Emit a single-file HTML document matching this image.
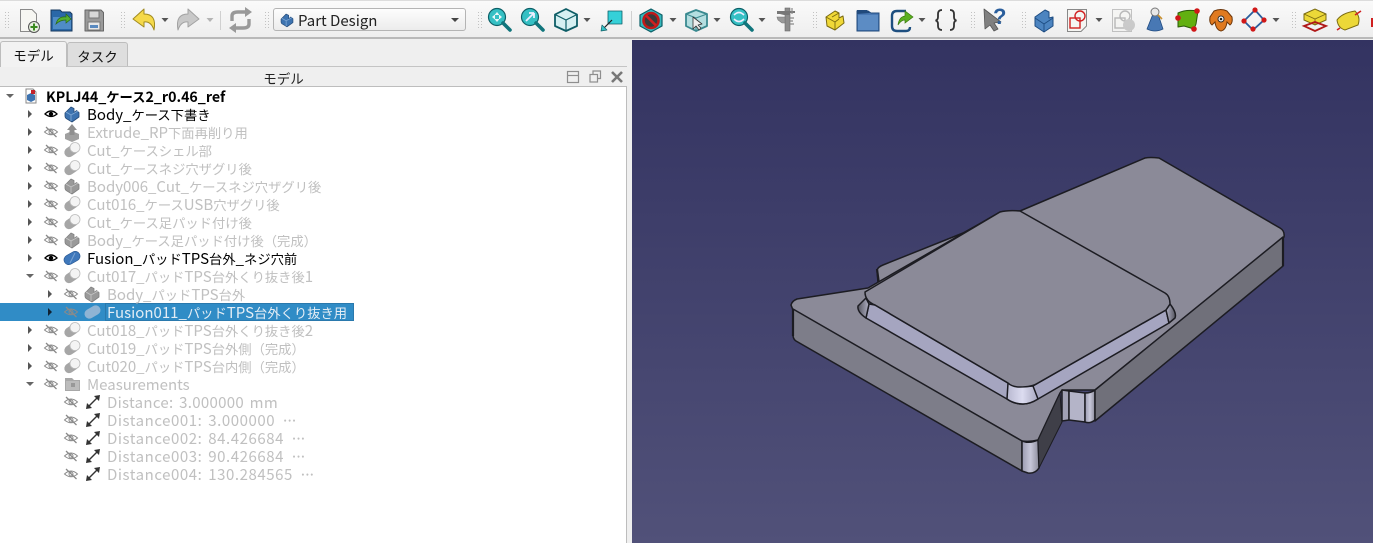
<!DOCTYPE html>
<html><head><meta charset="utf-8">
<style>
html,body{margin:0;padding:0;width:1373px;height:543px;overflow:hidden;background:#efefef}
body{position:relative;font-family:"Noto Sans CJK JP","Liberation Sans",sans-serif;font-size:14px;color:#000}
.abs{position:absolute}
#tb{left:0;top:0;width:1373px;height:39px;background:linear-gradient(#fafafa,#eeeeee);border-top:1px solid #dcdcdc;border-bottom:2px solid #b9b9b9;box-sizing:border-box}
#view{left:632px;top:40px;width:741px;height:503px;background:linear-gradient(#333361,#515179)}
#combo{left:273px;top:8px;width:193px;height:23px;border:1px solid #b4b4b4;border-radius:3px;background:linear-gradient(#fdfdfd,#ececec);box-sizing:border-box;line-height:23px;padding-left:24px;font-size:15px;color:#222}
.tab{box-sizing:border-box;text-align:center;font-size:13.5px;color:#111;line-height:26px}
#t1{left:0;top:41px;width:67px;height:26px;background:#f2f2f2;border:1px solid #bdbdbd;border-bottom:none;border-radius:3px 3px 0 0;z-index:2}
#t2{left:67px;top:42px;width:61px;height:25px;background:#dedede;border:1px solid #bdbdbd;border-radius:3px 3px 0 0}
#hd{left:0;top:66px;width:627px;height:21px;border-top:1px solid #c4c4c4;background:#efefef;text-align:center;line-height:22px;font-size:13.5px;color:#222;box-sizing:border-box;padding-right:60px}
#tree{left:0;top:86px;width:627px;height:457px;background:#fff;border-top:1px solid #bdbdbd;border-right:1px solid #bdbdbd;box-sizing:border-box}
.r{position:absolute;height:18px;line-height:20px;white-space:nowrap;font-size:13.3px;color:#c0c0c0}
.r i{font-style:normal;font-size:15px}
.d0{word-spacing:2px;letter-spacing:.3px}
.d{word-spacing:2px;letter-spacing:.55px}
.d s{text-decoration:none;letter-spacing:-4px}
.k{color:#000}
#sel{left:0;top:303px;width:354px;height:18px;background:#308cc6}
#foc{left:105px;top:303px;width:249px;height:18px;box-sizing:border-box;border:1px solid #2a79ad}
svg{position:absolute;left:0;top:0;overflow:visible}
</style></head><body>
<div class="abs" id="tb"></div>
<div class="abs" id="combo">Part Design</div>
<div class="abs" id="view"></div>
<div class="abs tab" id="t1">モデル</div>
<div class="abs tab" id="t2">タスク</div>
<div class="abs" id="hd">モデル</div>
<div class="abs" id="tree"></div>
<div class="abs" id="sel"></div><div class="abs" id="foc"></div>

<div class="r k" style="left:46px;top:87px;font-weight:700"><i style="font-size:14.2px">KPLJ44_</i>ケース<i style="font-size:14.2px">2_r0.46_ref</i></div>
<div class="r k" style="left:87px;top:105px"><i>Body_</i>ケース下書き</div>
<div class="r" style="left:87px;top:123px"><i>Extrude_RP</i>下面再削り用</div>
<div class="r" style="left:87px;top:141px"><i>Cut_</i>ケースシェル部</div>
<div class="r" style="left:87px;top:159px"><i>Cut_</i>ケースネジ穴ザグリ後</div>
<div class="r" style="left:87px;top:177px"><i>Body006_Cut_</i>ケースネジ穴ザグリ後</div>
<div class="r" style="left:87px;top:195px"><i>Cut016_</i>ケース<i>USB</i>穴ザグリ後</div>
<div class="r" style="left:87px;top:213px"><i>Cut_</i>ケース足パッド付け後</div>
<div class="r" style="left:87px;top:231px"><i>Body_</i>ケース足パッド付け後（完成）</div>
<div class="r k" style="left:87px;top:249px"><i>Fusion_</i>パッド<i>TPS</i>台外<i>_</i>ネジ穴前</div>
<div class="r" style="left:87px;top:267px"><i>Cut017_</i>パッド<i>TPS</i>台外くり抜き後<i>1</i></div>
<div class="r" style="left:107px;top:285px"><i>Body_</i>パッド<i>TPS</i>台外</div>
<div class="r" style="left:107px;top:303px;color:#e3edf5"><i>Fusion011_</i>パッド<i>TPS</i>台外くり抜き用</div>
<div class="r" style="left:87px;top:321px"><i>Cut018_</i>パッド<i>TPS</i>台外くり抜き後<i>2</i></div>
<div class="r" style="left:87px;top:339px"><i>Cut019_</i>パッド<i>TPS</i>台外側（完成）</div>
<div class="r" style="left:87px;top:357px"><i>Cut020_</i>パッド<i>TPS</i>台内側（完成）</div>
<div class="r" style="left:87px;top:375px"><i>Measurements</i></div>
<div class="r d0" style="left:107px;top:393px"><i>Distance: 3.000000 mm</i></div>
<div class="r d" style="left:107px;top:411px"><i>Distance001: 3.000000 <s>···</s></i></div>
<div class="r d" style="left:107px;top:429px"><i>Distance002: 84.426684 <s>···</s></i></div>
<div class="r d" style="left:107px;top:447px"><i>Distance003: 90.426684 <s>···</s></i></div>
<div class="r d" style="left:107px;top:465px"><i>Distance004: 130.284565 <s>···</s></i></div>

<svg width="1373" height="543" viewBox="0 0 1373 543">
<defs>
<linearGradient id="cyl" x1="0" x2="1" y1="0" y2="0"><stop offset="0" stop-color="#9a9ab0"/><stop offset=".5" stop-color="#c8c8da"/><stop offset="1" stop-color="#8c8c9c"/></linearGradient>
<linearGradient id="bev" x1="0" x2="1" y1="0" y2="0"><stop offset="0" stop-color="#b8b8d0"/><stop offset=".5" stop-color="#dcdcf0"/><stop offset="1" stop-color="#a8a8c0"/></linearGradient>
<linearGradient id="bl" x1="0" x2="1" y1="0" y2="0"><stop offset="0" stop-color="#55555f"/><stop offset="1" stop-color="#b0b0c4"/></linearGradient>
<linearGradient id="br" x1="0" x2="1" y1="0" y2="0"><stop offset="0" stop-color="#b0b0c4"/><stop offset="1" stop-color="#55555f"/></linearGradient>
<g id="tr"><path d="M-2-4 L2 0 L-2 4Z" fill="#555"/></g>
<g id="td"><path d="M-4-2 L4-2 L0 2Z" fill="#666"/></g>
<g id="dd"><path d="M-3.5-2 L3.5-2 L0 2Z" fill="#555"/></g>
<g id="eye"><path d="M-6 0 Q0-6 6 0 Q0 5-6 0Z" fill="none" stroke="#000" stroke-width="1.3"/><circle r="2.2" fill="#000"/></g>
<g id="noeye" fill="none" stroke="#8a8a8a" stroke-width="1"><path d="M-6.5 0 Q0-6 6.5 0 Q0 5.5-6.5 0Z"/><circle r="2"/><path d="M-5-5 L5.5 5" stroke-width="1.3"/></g>
<g id="body"><path d="M-7-1 L-1-7 L2-5.5 V-1.5 L4.5-3.5 L7-1.5 V3 L0 8 L-5 5 Q-7 4-7 2Z" fill="#3d73b0" stroke="#244a78" stroke-width=".8" stroke-linejoin="round"/><path d="M-6-2 L-1 1 V7 M-1 1 L6-3" fill="none" stroke="#7fa8d4" stroke-width=".9"/></g>
<g id="gbody"><path d="M-7-1 L-1-7 L2-5.5 V-1.5 L4.5-3.5 L7-1.5 V3 L0 8 L-5 5 Q-7 4-7 2Z" fill="#999" stroke="#808080" stroke-width=".8" stroke-linejoin="round"/><path d="M-6-2 L-1 1 V7 M-1 1 L6-3" fill="none" stroke="#c4c4c4" stroke-width=".9"/></g>
<g id="cut"><rect x="-8.5" y="-4.5" width="15" height="9.6" rx="4.8" transform="rotate(-35)" fill="#a6a6a6"/><circle cx="3" cy="-2.5" r="5" fill="#f4f4f4" stroke="#bcbcbc" stroke-width=".8"/></g>
<g id="fus"><rect x="-8.5" y="-4.8" width="17" height="9.6" rx="4.8" transform="rotate(-30)" fill="#3f78bb" stroke="#2b5a94" stroke-width=".7"/><path d="M-2 5 L3-5" stroke="#7aa3d3" stroke-width="1"/></g>
<g id="dist"><path d="M-6 6 L6-6" stroke="#333" stroke-width="1.4"/><path d="M7-7 L1-6 L6-1Z M-7 7 L-6 1 L-1 6Z" fill="#333"/></g>
</defs>

<!-- 3D model -->
<g stroke="#1c1c22" stroke-width="1.5" stroke-linejoin="round">
<path d="M877 270 Q878 267 883 265 L963 233 L985 221 L878 283Z" fill="#8b8a98"/>
<path d="M877 269 L879 284" stroke-width="2.2" fill="none"/>
<path d="M791 305 Q792 301 797 299 L868 288 L1000 212 Q1006 211 1020 211 L1145 158 Q1150 157 1159 158 L1280 228 Q1285 231 1284 237 L1095 390 L1062 390 L1060 393 L1038 440 Q1030 442 1022 441 L793 310Z" fill="#8b8a98"/>
<path d="M793 309 L1022 441 L1022 471 L796 341 Q793 339 793 335Z" fill="#7d7d89"/>
<path d="M793 309 L793 336" stroke-width="2.2"/>
<path d="M1022 441 Q1030 444 1038 440 L1039 468 Q1035 474 1028 473 L1022 471Z" fill="url(#cyl)"/>
<path d="M1038 440 L1060 393 L1062 422 L1039 468Z" fill="#3f3f48" stroke-width="1"/>
<path d="M1062 390 L1069 391 L1069 420 L1062 421Z" fill="#a0a0b4"/>
<path d="M1069 391 L1085 393 L1085 422 L1069 420Z" fill="#b4b4c8"/>
<path d="M1085 393 Q1091 393 1095 390 L1095 420 Q1090 424 1085 422Z" fill="url(#cyl)"/>
<path d="M1095 390 L1283 237 L1283 266 L1095 421Z" fill="#70707a"/>
<path d="M1283 237 L1283 266" stroke-width="2.2"/>
<!-- bevel -->
<path d="M875 305 L1008 383 Q1020 388 1033 386 L1038 383 L1166 310 L1169 323 L1038 399 Q1030 404 1023 404 Q1014 404 1007 399 L866 318 L869 304Z" fill="#a5a5c0"/>
<path d="M866 298 L858 306 Q857 312 866 318 L869 304Z" fill="url(#bl)"/>
<path d="M1166 310 L1170 304 Q1177 313 1175 318 L1169 323Z" fill="url(#br)"/>
<path d="M1008 383 Q1020 388 1033 386 L1038 399 Q1030 404 1023 404 Q1014 404 1007 399Z" fill="url(#bev)"/>
<!-- pad top -->
<path d="M865 292 L1000 212 Q1008 210 1020 211 L1165 293 Q1170 296 1170 304 L1166 310 L1038 383 Q1032 387 1020 387 Q1012 387 1008 383 L875 305 Q865 301 865 292Z" fill="#8b8a98"/>
</g>

<!-- Panel buttons -->
<g fill="none" stroke="#8e8e8e" stroke-width="1.2">
<rect x="567.5" y="71.5" width="11" height="11"/><path d="M567.5 75.5 H578.5"/>
<rect x="590" y="74.5" width="7.5" height="7.5"/><path d="M593 74 V71 H600.5 V78.5 H597.5"/>
<path d="M612 72 L622 82 M622 72 L612 82" stroke="#777" stroke-width="2.6"/>
</g>

<!-- Tree icons -->
<use href="#td" x="10" y="96"/>
<path d="M26 89 H33 L36 92 V103 H26Z" fill="#fff" stroke="#888"/><path d="M27 95 L31 93 L35 95 V100 L31 102 L27 100Z" fill="#3d73b0"/><path d="M31 90 H35 V94 H31Z" fill="#c4222a"/>
<use href="#tr" x="30" y="114"/><use href="#eye" x="51" y="114"/><use href="#body" x="72" y="114"/>
<use href="#tr" x="30" y="132"/><use href="#noeye" x="51" y="132"/>
<path d="M65 134 L72 131 L79 134 L79 139 L72 142 L65 139Z" fill="#a0a0a0"/><path d="M72 124 L77 130 H74.5 V135 H69.5 V130 H67Z" fill="#8f8f8f"/>
<use href="#tr" x="30" y="150"/><use href="#noeye" x="51" y="150"/><use href="#cut" x="72" y="150"/>
<use href="#tr" x="30" y="168"/><use href="#noeye" x="51" y="168"/><use href="#cut" x="72" y="168"/>
<use href="#tr" x="30" y="186"/><use href="#noeye" x="51" y="186"/><use href="#gbody" x="72" y="186"/>
<use href="#tr" x="30" y="204"/><use href="#noeye" x="51" y="204"/><use href="#cut" x="72" y="204"/>
<use href="#tr" x="30" y="222"/><use href="#noeye" x="51" y="222"/><use href="#cut" x="72" y="222"/>
<use href="#tr" x="30" y="240"/><use href="#noeye" x="51" y="240"/><use href="#gbody" x="72" y="240"/>
<use href="#tr" x="30" y="258"/><use href="#eye" x="51" y="258"/><use href="#fus" x="72" y="258"/>
<use href="#td" x="30" y="276"/><use href="#noeye" x="51" y="276"/><use href="#cut" x="72" y="276"/>
<use href="#tr" x="50" y="294"/><use href="#noeye" x="71" y="294"/><use href="#gbody" x="92" y="294"/>
<path d="M48 308 L52 312 L48 316Z" fill="#123"/><use href="#noeye" x="71" y="312"/>
<rect x="84" y="307.2" width="17" height="9.6" rx="4.8" transform="rotate(-30 92.5 312)" fill="#8fb4d4"/>
<use href="#tr" x="30" y="330"/><use href="#noeye" x="51" y="330"/><use href="#cut" x="72" y="330"/>
<use href="#tr" x="30" y="348"/><use href="#noeye" x="51" y="348"/><use href="#cut" x="72" y="348"/>
<use href="#tr" x="30" y="366"/><use href="#noeye" x="51" y="366"/><use href="#cut" x="72" y="366"/>
<use href="#td" x="30" y="384"/><use href="#noeye" x="51" y="384"/>
<path d="M65 378 H72 L74 380 H80 V391 H65Z" fill="#a8a8a8"/><path d="M66 381 H79 V390 H66Z" fill="#bcbcbc"/><rect x="71" y="383" width="4" height="4" fill="#989898"/>
<use href="#noeye" x="71" y="402"/><use href="#dist" x="93" y="402"/>
<use href="#noeye" x="71" y="420"/><use href="#dist" x="93" y="420"/>
<use href="#noeye" x="71" y="438"/><use href="#dist" x="93" y="438"/>
<use href="#noeye" x="71" y="456"/><use href="#dist" x="93" y="456"/>
<use href="#noeye" x="71" y="474"/><use href="#dist" x="93" y="474"/>

<!-- Toolbar grips -->
<g fill="#c2c2c2">
<path id="g0" d="M5 12h1v1H5zM5 15h1v1H5zM5 18h1v1H5zM5 21h1v1H5zM5 24h1v1H5zM5 27h1v1H5zM8 12h1v1H8zM8 15h1v1H8zM8 18h1v1H8zM8 21h1v1H8zM8 24h1v1H8zM8 27h1v1H8z"/>
<use href="#g0" x="116"/><use href="#g0" x="260"/><use href="#g0" x="473"/><use href="#g0" x="808"/><use href="#g0" x="966"/><use href="#g0" x="1017"/><use href="#g0" x="1287"/>
</g>
<rect x="220" y="11" width="1" height="19" fill="#d0d0d0"/><rect x="631" y="11" width="1" height="19" fill="#d0d0d0"/>

<!-- File icons -->
<path d="M20.5 9.5 H32 L36.5 14 V31.5 H20.5Z" fill="#f6f6f2" stroke="#8a8a8a"/><circle cx="34" cy="27" r="5.5" fill="#e8f0e0" stroke="#555"/><path d="M34 23.5 V30.5 M30.5 27 H37.5" stroke="#3a8a20" stroke-width="2"/>
<path d="M51 10 H60 L62 12 H70 L72 14 V31 H51Z" fill="#2a68a8" stroke="#16385e"/><path d="M53 17 H71 V29 H53Z" fill="#4f8cc6"/><path d="M56 24 Q58 16 66 17 V14 L71 19 L66 23 V20 Q60 20 56 24Z" fill="#54b030" stroke="#2c6a14" stroke-width=".7"/>
<path d="M85 10 H101 L103.5 12.5 V31 H85Z" fill="#9a9a9a" stroke="#666" stroke-linejoin="round"/><rect x="89" y="11" width="10" height="7" fill="#d8d8d8" stroke="#777"/><rect x="88" y="22" width="12" height="8" fill="#e8e8e8" stroke="#777"/><rect x="90" y="25" width="8" height="3" fill="#5a8ac0"/>

<!-- Undo/redo/refresh -->
<path d="M133 19 L144 9 L144 14 Q157 14 154 30 Q151 21 144 22 L144 27Z" fill="#f5d94a" stroke="#a08a20" stroke-linejoin="round"/>
<use href="#dd" x="165" y="20"/>
<path d="M199 19 L188 9 L188 14 Q175 14 178 30 Q181 21 188 22 L188 27Z" fill="#c8c8c8" stroke="#a2a2a2" stroke-linejoin="round"/>
<use href="#dd" x="210" y="20" opacity=".4"/>
<g fill="none" stroke="#999" stroke-width="3.4"><path d="M232 21 V16 Q232 12 238 12 H247"/><path d="M249 19 V24 Q249 28 243 28 H234"/></g><path d="M245 7 L252 12 L245 17Z M236 23 L229 28 L236 33Z" fill="#999"/>

<!-- Combo -->
<g transform="translate(287 20) scale(.85)"><use href="#body"/></g>
<path d="M451 18 H459 L455 22Z" fill="#444"/>

<!-- View icons -->
<g stroke="#0d6068" stroke-linejoin="round">
<g><circle cx="497" cy="17" r="8.5" fill="#35c0c4" stroke-width="1.2"/><path d="M503 23 L510 30" stroke="#10757c" stroke-width="3.6" stroke-linecap="round"/><path d="M497 12 L499.5 15H494.5ZM497 22L494.5 19H499.5ZM492 17L495 14.5V19.5ZM502 17L499 14.5V19.5Z" fill="#e8f8f8" stroke="none"/></g>
<g><circle cx="530" cy="17" r="8.5" fill="#35c0c4" stroke-width="1.2"/><path d="M536 23 L543 30" stroke="#10757c" stroke-width="3.6" stroke-linecap="round"/><path d="M526 21 L534 13 M534 13 H529 M534 13 V18" stroke="#eef" stroke-width="1.8" fill="none"/></g>
<g fill="none" stroke="#0d5d66" stroke-width="1.8"><path d="M566 9 L577 14.5 V26 L566 31 L555 26 V14.5Z" fill="#d5f0f2"/><path d="M555 14.5 L566 20 L577 14.5 M566 20 V31" stroke-width="1.2"/></g>
<path d="M608 11 H622 V24 H608Z" fill="#35d0d8" stroke-width=".8"/><path d="M612 20 L603 29" stroke="#222" stroke-width="1.2" fill="none"/><path d="M601 31 L602 25 L607 30Z" fill="#35c0c4" stroke-width=".7"/>
<path d="M651 9 L662 15 V26 L651 32 L640 26 V15Z" fill="#35b8bc" stroke-width="1.2"/><circle cx="651" cy="20.5" r="7.5" fill="#3a3a3a" stroke="#c01818" stroke-width="2.6"/><path d="M646 15.5 L656 25.5" stroke="#d02020" stroke-width="2.6"/>
<g fill="none" stroke="#3a8a90"><path d="M696 10 L707 14 V26 L696 31 L686 26 V14Z" fill="#b4dee0" stroke-width="1.8"/><path d="M686 14 L696 18 L707 14 M696 18 V31" stroke-width="1"/></g><path d="M693 17 L693 29 L696 26 L699 30 L701 28 L698 25 L702 24Z" fill="#eee" stroke="#333" stroke-width=".8"/>
<g><circle cx="739" cy="17" r="8.5" fill="#35c0c4" stroke-width="1.2"/><path d="M745 23 L752 30" stroke="#10757c" stroke-width="3.6" stroke-linecap="round"/><path d="M734 15 Q739 10 744 15 M744 19 Q739 24 734 19" stroke="#eef" stroke-width="1.6" fill="none"/></g>
</g>
<!-- Caliper -->
<rect x="785" y="8" width="5" height="23" fill="#8c8c8c" stroke="#6a6a6a" stroke-width=".6"/>
<path d="M777 11 H795 V13 H790 V15 H784 L780 14 H777Z" fill="#777"/>
<path d="M777 17 H785 V23 H782 L778 20Z" fill="#9a9a9a" stroke="#777" stroke-width=".6"/>
<path d="M792 8 V14 M790 18 H794 M790 21 H793 M790 24 H794" stroke="#8a8a8a" stroke-width="1.2"/>
<use href="#dd" x="587" y="20"/><use href="#dd" x="673" y="20"/><use href="#dd" x="717" y="20"/><use href="#dd" x="762" y="20"/>

<!-- Yellow part -->
<path d="M826 17 L835 11 L839 13 V18 L843 16 L844 23 L835 30 L827 26 Z" fill="#f0d838" stroke="#7a6a10" stroke-linejoin="round"/><path d="M826 17 L835 22 V30 M835 22 L839 19 M832 17 L839 13" fill="none" stroke="#7a6a10" stroke-width=".9"/>
<!-- Folder -->
<path d="M857 11 H868 L871 13 H879 V31 H857Z" fill="#4878b4" stroke="#214a7c"/><path d="M858 15 H878 V30 H858Z" fill="#5c8cc4"/><path d="M857 10 H867 L870 13 L857 14Z" fill="#214a7c"/>
<!-- Link -->
<path d="M906 11 H897 Q892 11 892 16 V26 Q892 31 897 31 H906 Q910 31 910 27" fill="none" stroke="#1e4f80" stroke-width="2.4"/>
<path d="M898 25 Q899 17 905 16 V11 L913 17 L905 23 V20 Q901 20 898 25Z" fill="#5cb020" stroke="#3a7a10" stroke-width=".7"/>
<use href="#dd" x="922" y="20"/>
<!-- Braces -->
<g fill="none" stroke="#333" stroke-width="1.8"><path d="M942 10 Q938 10 938 14 V17 Q938 20 935.5 20.5 Q938 21 938 24 V26 Q938 30 942 30"/><path d="M950 10 Q954 10 954 14 V17 Q954 20 956.5 20.5 Q954 21 954 24 V26 Q954 30 950 30"/></g>
<!-- Help -->
<path d="M984 9 L985 29 L990 25 L994 31 L998 29 L994 23 L1001 22Z" fill="#808080" stroke="#555" stroke-width=".8" stroke-linejoin="round"/>
<text x="993" y="24" font-family="'Liberation Sans',sans-serif" font-size="22" font-weight="700" fill="#2a5e9c">?</text>
<!-- Body -->
<path d="M1035 17 L1045 10 L1049 12 V18 L1053 17 L1053 26 L1044 32 L1035 26Z" fill="#4c84c0" stroke="#1d4c82" stroke-linejoin="round"/><path d="M1035 18 L1044 24 V32 M1044 24 L1053 18" stroke="#1d4c82" fill="none" stroke-width=".9"/>
<!-- Sketch -->
<path d="M1067.5 9.5 H1086.5 V26 L1081 31.5 H1067.5Z" fill="#f5f5f2" stroke="#888"/><rect x="1070" y="18" width="10" height="10" fill="none" stroke="#d02020" stroke-width="1.4"/><circle cx="1080" cy="16" r="5" fill="none" stroke="#d02020" stroke-width="1.4"/>
<use href="#dd" x="1099" y="20"/>
<!-- Validate sketch -->
<g opacity=".55"><path d="M1112.5 9.5 H1131.5 V31.5 H1112.5Z" fill="#f5f5f2" stroke="#999"/><rect x="1115" y="18" width="10" height="10" fill="none" stroke="#888" stroke-width="1.4"/><circle cx="1125" cy="16" r="5" fill="none" stroke="#888" stroke-width="1.4"/><circle cx="1129" cy="25" r="6" fill="#aaa"/></g>
<!-- Shape binder -->
<path d="M1153 14 L1147 29 Q1155 33 1163 29 L1158 14Z" fill="#4878b4" stroke="#1e4a80" stroke-width=".8"/><circle cx="1155" cy="12" r="4" fill="#e8e8e8" stroke="#777"/><path d="M1158 15 L1162 19" stroke="#c89030" stroke-width="1.6"/>
<!-- Green face -->
<path d="M1178 13 Q1186 9 1198 11 L1196 24 L1194 29 L1184 26 L1178 27Z" fill="#62b010" stroke="#2a5a08" stroke-linejoin="round"/><circle cx="1197" cy="11" r="2.8" fill="#d01818"/><circle cx="1178" cy="18" r="2.8" fill="#d01818"/><circle cx="1194" cy="29" r="2.8" fill="#d01818"/>
<!-- Orange head -->
<path d="M1214 11 Q1221 8 1227 11 L1232 17 Q1233 23 1230 25 L1227 22 Q1226 30 1221 31 Q1216 30 1215 22 L1212 25 Q1209 23 1210 17Z" fill="#e07a20" stroke="#6a3408"/><circle cx="1221" cy="19" r="3" fill="#fff" stroke="#333"/><circle cx="1221" cy="19" r="1.3" fill="#222"/>
<!-- Diamond -->
<path d="M1255 10 L1264 20 L1253 30 L1244 21Z" fill="none" stroke="#2a5e9c" stroke-width="1.8"/><circle cx="1255" cy="10" r="2.6" fill="#d01818"/><circle cx="1264" cy="20" r="2.6" fill="#d01818"/><circle cx="1253" cy="29" r="2.6" fill="#d01818"/><circle cx="1244" cy="21" r="2.6" fill="#d01818"/>
<use href="#dd" x="1276" y="20"/>
<!-- Pad -->
<path d="M1304 14 L1315 9 L1326 14 V20 L1315 25 L1304 20Z" fill="#ecd838" stroke="#7a6a10"/><path d="M1304 14 L1315 19 L1326 14 M1315 19 V25" fill="none" stroke="#7a6a10" stroke-width=".8"/><path d="M1304 26 L1315 22 L1326 26 L1315 31Z" fill="none" stroke="#b01818" stroke-width="1.8"/>
<!-- Revolve -->
<path d="M1337 20 Q1342 13 1355 11 Q1361 17 1358 25 L1345 30 Q1338 28 1337 20Z" fill="#ecd838" stroke="#7a6a10"/><path d="M1337 30 L1340 28 M1355 15 L1361 11" stroke="#d02020" stroke-width="1.6"/>
<rect x="1371" y="18" width="2" height="9" fill="#d02020"/>
</svg>
</body></html>
